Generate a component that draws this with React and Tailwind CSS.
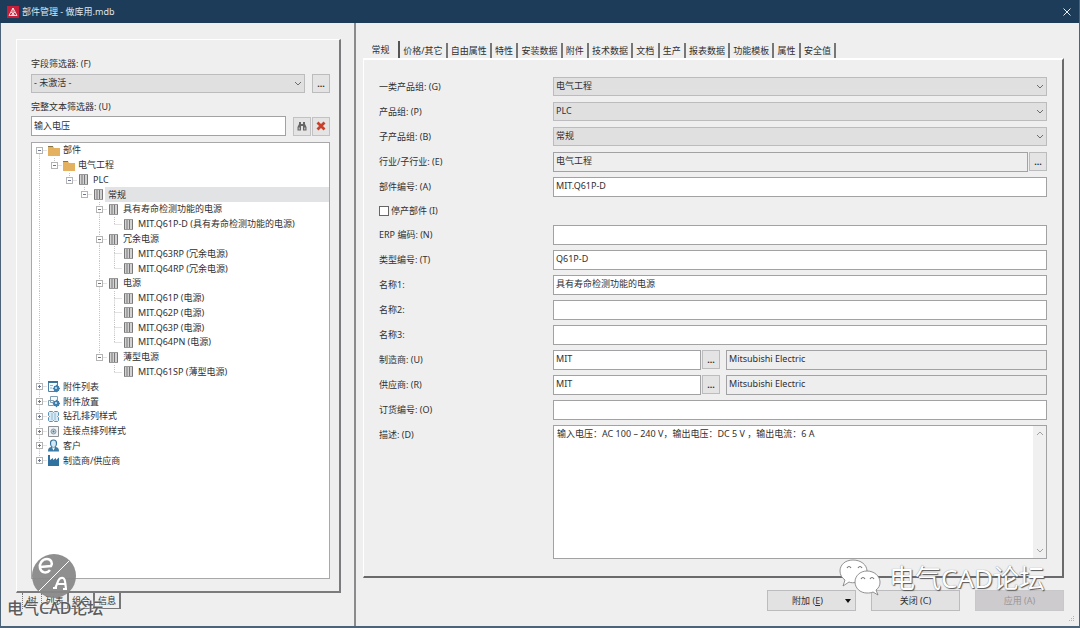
import { useState } from 'react';

const TREE = [
  { label: '部件', level: 0, icon: 'folder', open: true },
  { label: '电气工程', level: 1, icon: 'folder', open: true },
  { label: 'PLC', level: 2, icon: 'module', open: true },
  { label: '常规', level: 3, icon: 'module', open: true },
  { label: '具有寿命检测功能的电源', level: 4, icon: 'module', open: true },
  { label: 'MIT.Q61P-D (具有寿命检测功能的电源)', level: 5, icon: 'module' },
  { label: '冗余电源', level: 4, icon: 'module', open: true },
  { label: 'MIT.Q63RP (冗余电源)', level: 5, icon: 'module' },
  { label: 'MIT.Q64RP (冗余电源)', level: 5, icon: 'module' },
  { label: '电源', level: 4, icon: 'module', open: true },
  { label: 'MIT.Q61P (电源)', level: 5, icon: 'module' },
  { label: 'MIT.Q62P (电源)', level: 5, icon: 'module' },
  { label: 'MIT.Q63P (电源)', level: 5, icon: 'module' },
  { label: 'MIT.Q64PN (电源)', level: 5, icon: 'module' },
  { label: '薄型电源', level: 4, icon: 'module', open: true },
  { label: 'MIT.Q61SP (薄型电源)', level: 5, icon: 'module' },
  { label: '附件列表', level: 0, icon: 'list', open: false },
  { label: '附件放置', level: 0, icon: 'placement', open: false },
  { label: '钻孔排列样式', level: 0, icon: 'drill', open: false },
  { label: '连接点排列样式', level: 0, icon: 'point', open: false },
  { label: '客户', level: 0, icon: 'customer', open: false },
  { label: '制造商/供应商', level: 0, icon: 'factory', open: false },
];

const TABS = ['价格/其它', '自由属性', '特性', '安装数据', '附件', '技术数据', '文档', '生产', '报表数据', '功能模板', '属性', '安全值'];

// true when a later row sits on the same level under the same parent
function hasNext(index, level) {
  for (let i = index + 1; i < TREE.length; i++) {
    if (TREE[i].level < level) return false;
    if (TREE[i].level === level) return true;
  }
  return false;
}

function Gear() {
  return (
    <g>
      <circle cx="9.5" cy="8.5" r="3" fill="#3f7fae" />
      <path d="M9.5 4.8v7.4M5.8 8.5h7.4M7 6l5 5M12 6l-5 5" stroke="#3f7fae" strokeWidth="1" />
      <circle cx="9" cy="8" r="1" fill="#dcecf6" />
    </g>
  );
}

function TreeIcon({ name }) {
  return (
    <svg viewBox="0 0 13 13" className="h-[13px] w-[13px] shrink-0" fill="none">
      {name === 'folder' && (
        <>
          <path d="M1 2h5l1 2h6v8H1z" fill="#e3b160" />
          <path d="M1 2.5h5" stroke="#8a744a" />
        </>
      )}
      {name === 'module' && (
        <>
          <path d="M2 1.5h8.5v10H2z" fill="#d2d2d2" />
          <path d="M2.5 1v11M5 2v9M7.5 2v9M10.5 1v11" stroke="#777" />
          <path d="M2 1.5h9M2 11.5h9" stroke="#999" />
        </>
      )}
      {name === 'list' && (
        <>
          <path d="M1.5 1.5h9v10h-9z" fill="#f4f9fc" stroke="#4f81a5" />
          <path d="M1 2h10" stroke="#3c7198" strokeWidth="2" />
          <path d="M3 5.5h3M3 8h2" stroke="#8fb3cb" />
          <Gear />
        </>
      )}
      {name === 'placement' && (
        <>
          <path d="M3.5 1.5h7v6h-7zM1.5 5.5h5v5h-5z" fill="#f7fafc" stroke="#7f9cb0" />
          <Gear />
        </>
      )}
      {name === 'drill' && (
        <>
          <path d="M1.5 2.5l1-1h3l1 1 1-1h3l1 1v3l-1 1 1 1v3l-1 1h-3l-1-1-1 1h-3l-1-1v-3l1-1-1-1z" fill="#d9eaf4" stroke="#5b93b6" />
          <path d="M5 3v7M8 3v7" stroke="#8fb8d0" />
        </>
      )}
      {name === 'point' && (
        <>
          <path d="M1.5 1.5h10v10h-10z" fill="#f1f3f4" stroke="#8b9195" />
          <circle cx="6.5" cy="6.5" r="2.5" fill="#c6d5df" stroke="#7d97a8" />
          <circle cx="6.5" cy="6.5" r="1" fill="#55758a" />
        </>
      )}
      {name === 'customer' && (
        <>
          <path d="M1 12.500c0-3 1-4 3-4.500h5c2 .5 3 1.500 3 4.500z" fill="#3b7ba8" />
          <path d="M3.500 4c0-2 1-3 3-3s3 1 3 3-1 4.500-3 4.500-3-2.500-3-4.500z" fill="#d5e7f2" stroke="#34719c" strokeWidth="1.200" />
          <path d="M5 8.500l1.500 3L8 8.500z" fill="#fff" />
        </>
      )}
      {name === 'factory' && (
        <path d="M1 12V1h2v5l3-2v2l3-2v2l3-2.5V12z" fill="#2f719f" />
      )}
    </svg>
  );
}

function TreeRow({ node, index }) {
  const selected = index === 3;
  const isLeaf = node.open === undefined;
  const guides = [];
  for (let l = 0; l < node.level; l++) guides.push(hasNext(index, l));

  return (
    <li role="treeitem" aria-level={node.level + 1} aria-selected={selected} className="flex min-h-0 items-center">
      {guides.map((line, l) => (
        <svg key={l} className="h-full w-[15px] shrink-0">
          {line && <line x1="7.5" y1="0" x2="7.5" y2="100%" stroke="#c4c4c4" strokeDasharray="1 1" />}
        </svg>
      ))}
      <button type="button" tabIndex={isLeaf ? -1 : 0} aria-label={node.label} className="h-full w-[15px] shrink-0">
        <svg className="block h-full w-[15px]">
          {index > 0 && <line x1="7.5" y1="0" x2="7.5" y2="50%" stroke="#c4c4c4" strokeDasharray="1 1" />}
          {hasNext(index, node.level) && <line x1="7.5" y1="50%" x2="7.5" y2="100%" stroke="#c4c4c4" strokeDasharray="1 1" />}
          <line x1="7.5" y1="7.5" x2="15" y2="7.5" stroke="#c4c4c4" strokeDasharray="1 1" />
          {!isLeaf && (
            <>
              <rect x="4.5" y="4.5" width="6" height="6" fill="#fff" stroke="#b4b4b4" />
              <path d={node.open ? 'M6 7.5h3' : 'M6 7.5h3M7.5 6v3'} stroke="#6b7690" />
            </>
          )}
        </svg>
      </button>
      <TreeIcon name={node.icon} />
      <span className={selected ? 'flex h-full flex-1 items-center bg-[#e2e3e5] pl-[3px]' : 'pl-[3px]'}>{node.label}</span>
    </li>
  );
}

function Chevron({ className }) {
  return (
    <svg viewBox="0 0 8 6" className={`h-[6px] w-2 ${className}`} fill="none" stroke="#6d6d6d">
      <path d="M1 1l3 3 3-3" />
    </svg>
  );
}

function Select({ id, value }) {
  return (
    <div className="relative min-w-0 flex-1">
      <select id={id} defaultValue={value} className="block h-[19px] w-full appearance-none border border-[#bcbcbe] bg-[#e0e0e1] px-[2px] pb-[2px] leading-3">
        <option>{value}</option>
      </select>
      <Chevron className="pointer-events-none absolute right-[3px] top-[7px]" />
    </div>
  );
}

function DotsButton({ label }) {
  return (
    <button type="button" aria-label={label} className="h-[19px] w-[18px] shrink-0 border border-[#bcbcbe] bg-[#e4e4e5] font-bold leading-3">
      ...
    </button>
  );
}

function Input({ id, value = '', readOnly, label, className = 'flex-1' }) {
  return (
    <input
      id={id}
      aria-label={label}
      defaultValue={value}
      readOnly={readOnly}
      className={`block h-5 min-w-0 border border-[#a2a2a4] px-[2px] pb-[2px] leading-3 ${readOnly ? 'bg-[#eeeeef]' : 'bg-white'} ${className}`}
    />
  );
}

function Row({ id, label, children }) {
  return (
    <div className="flex h-[25px] items-center">
      <label htmlFor={id} className="w-[174px] shrink-0">{label}</label>
      {children}
    </div>
  );
}

function LeftPanel() {
  return (
    <aside className="flex w-[353px] shrink-0 flex-col pb-[17px] pl-[15px] pr-[13px] pt-4">
      <div className="flex min-h-0 flex-1 flex-col border-b-2 border-l border-r-2 border-t border-b-[#7b7b7d] border-l-white border-r-[#7b7b7d] border-t-white pb-3 pl-[14px] pr-[9px] pt-[18px]">
        <label htmlFor="field-filter" className="leading-3">字段筛选器: (F)</label>
        <div className="mt-1 flex gap-[7px]">
          <Select id="field-filter" value="- 未激活 -" />
          <DotsButton label="字段筛选器" />
        </div>
        <label htmlFor="text-filter" className="mt-2 leading-3">完整文本筛选器: (U)</label>
        <div className="mt-[3px] flex items-center">
          <Input id="text-filter" value="输入电压" />
          <button type="button" aria-label="查找" className="ml-[7px] flex h-[19px] w-[18px] items-center justify-center border border-[#c2c2c4] bg-[#e4e4e5]">
            <svg viewBox="0 0 10 10" className="h-[10px] w-[10px]" fill="#666">
              <path d="M2 1h2v2h2V1h2v2l1.5 3v3.5H6V5H4v4.5H.5V6L2 3z" />
              <path d="M2.2 6.5v2M7.8 6.5v2" stroke="#d8d8d8" />
            </svg>
          </button>
          <button type="button" aria-label="清除" className="ml-px flex h-[19px] w-[18px] items-center justify-center border border-[#c2c2c4] bg-[#e4e4e5]">
            <svg viewBox="0 0 10 10" className="h-[10px] w-[10px]" stroke="#c8402c" strokeWidth="2.8">
              <path d="M1.5 1.5l7 7M8.5 1.5l-7 7" />
            </svg>
          </button>
        </div>
        <div className="mt-[6px] flex-1 overflow-hidden border border-[#a8a8aa] bg-white">
          <ul role="tree" className="grid h-[325px] auto-rows-fr">
            {TREE.map((node, i) => <TreeRow key={i} node={node} index={i} />)}
          </ul>
        </div>
      </div>
      <div role="tablist" className="flex h-4 pl-[6px]">
        <button role="tab" aria-selected="true" className="w-5 border-x border-dotted border-[#777]">树</button>
        <button role="tab" className="w-[27px] border-b border-r-2 border-[#777]">列表</button>
        <button role="tab" className="w-[26px] border-b border-r-2 border-[#777]">组合</button>
        <button role="tab" className="w-[26px] border-b border-r-2 border-[#777]">信息</button>
      </div>
    </aside>
  );
}

function PartForm() {
  const [discontinued, setDiscontinued] = useState(false);

  return (
    <form className="flex min-h-0 flex-1 flex-col border-b-2 border-l border-r-2 border-t-2 border-b-[#6a6a6c] border-l-white border-r-[#6a6a6c] border-t-white pb-[17px] pl-[15px] pr-[15px] pt-[14px]">
      <Row id="group-g" label="一类产品组: (G)"><Select id="group-g" value="电气工程" /></Row>
      <Row id="group-p" label="产品组: (P)"><Select id="group-p" value="PLC" /></Row>
      <Row id="group-b" label="子产品组: (B)"><Select id="group-b" value="常规" /></Row>
      <Row id="trade" label="行业/子行业: (E)">
        <Input id="trade" value="电气工程" readOnly />
        <span className="w-px" />
        <DotsButton label="行业" />
      </Row>
      <Row id="part-no" label="部件编号: (A)"><Input id="part-no" value="MIT.Q61P-D" /></Row>
      <div className="flex h-[23px] items-center">
        <input
          id="discontinued"
          type="checkbox"
          checked={discontinued}
          onChange={(e) => setDiscontinued(e.target.checked)}
          className="h-[10px] w-[10px] appearance-none border border-[#666] bg-white checked:bg-[#555]"
        />
        <label htmlFor="discontinued" className="pl-[2px]">停产部件 (I)</label>
      </div>
      <Row id="erp" label="ERP 编码: (N)"><Input id="erp" /></Row>
      <Row id="type-no" label="类型编号: (T)"><Input id="type-no" value="Q61P-D" /></Row>
      <Row id="name1" label="名称1:"><Input id="name1" value="具有寿命检测功能的电源" /></Row>
      <Row id="name2" label="名称2:"><Input id="name2" /></Row>
      <Row id="name3" label="名称3:"><Input id="name3" /></Row>
      <Row id="maker" label="制造商: (U)">
        <Input id="maker" value="MIT" className="mr-px w-[148px]" />
        <DotsButton label="制造商" />
        <Input label="制造商名称" value="Mitsubishi Electric" readOnly className="ml-[6px] flex-1" />
      </Row>
      <Row id="supplier" label="供应商: (R)">
        <Input id="supplier" value="MIT" className="mr-px w-[148px]" />
        <DotsButton label="供应商" />
        <Input label="供应商名称" value="Mitsubishi Electric" readOnly className="ml-[6px] flex-1" />
      </Row>
      <Row id="order-no" label="订货编号: (O)"><Input id="order-no" /></Row>
      <div className="flex min-h-0 flex-1 pt-[3px]">
        <label htmlFor="description" className="w-[174px] shrink-0 pt-1 leading-3">描述: (D)</label>
        <div className="flex flex-1 border border-[#a2a2a4] bg-white">
          <textarea
            id="description"
            defaultValue="输入电压：AC 100 – 240 V，输出电压：DC 5 V ，输出电流：6 A"
            className="min-w-0 flex-1 resize-none overflow-hidden px-[3px] pt-[2px] leading-3 outline-none"
          />
          <div className="flex w-[13px] flex-col items-center justify-between bg-[#f0f0f1] py-1">
            <Chevron className="rotate-180 opacity-60" />
            <Chevron className="opacity-60" />
          </div>
        </div>
      </div>
    </form>
  );
}

function Watermarks() {
  return (
    <div aria-hidden="true" className="pointer-events-none">
      <svg viewBox="0 0 44 44" className="absolute bottom-[28px] left-8 h-11 w-11">
        <circle cx="22" cy="22" r="22" fill="#868686" fillOpacity="0.93" />
        <path d="M7 37L37 7" stroke="#fff" />
        <path d="M8 13l11-1c2-3 0-7-4-7-5 0-8 5-7 9 1 5 7 6 10 2" stroke="#fff" strokeWidth="2.5" fill="none" />
        <path d="M21 34h4M23 34c3-3 2-11 8-10 3 1 2 7 3 10M26 30h7M31 35h4" stroke="#fff" strokeWidth="2.2" fill="none" />
      </svg>
      <span className="absolute bottom-[8px] left-[7px] text-base font-medium leading-5 text-[#5c5c5e] [text-shadow:0_0_2px_#fff]">电气CAD论坛</span>
      <div className="absolute bottom-[29px] right-[34px] flex items-center gap-2">
        <svg viewBox="0 0 42 38" className="h-[38px] w-[42px]" fill="#fff" stroke="#77777a" strokeWidth="0.8">
          <path d="M14 1C6 1 1 6 1 12c0 4 2 7 5 9l-2 6 6-4c2 1 5 1 8 0 6-1 10-5 10-11S22 1 14 1z" />
          <path d="M28 12c-7 0-12 5-12 11s5 11 12 11c2 0 4 0 6-1l5 3-2-5c3-2 4-5 4-8 0-6-6-11-13-11z" />
          <path d="M8 9q2-3 4 0M19 9q2-3 4 0M22 20q2-3 4 0M31 20q2-3 4 0" fill="none" strokeWidth="1.2" />
        </svg>
        <span className="text-[26px] font-normal leading-9 text-white [text-shadow:1px_1px_1px_#555,0_0_1px_#777]">电气CAD论坛</span>
      </div>
    </div>
  );
}

export default function App() {
  return (
    <div className="relative flex h-screen min-h-[600px] flex-col overflow-hidden border-b-2 border-r border-[#4d6478] bg-[#efeff0] font-['Noto_Sans','Noto_Sans_CJK_SC',sans-serif] text-[9px] leading-3 text-[#2f2f31]">
      <header className="flex h-[23px] shrink-0 items-center bg-[#1c3c59] pl-[7px] pr-2 text-[#dfe6ec]">
        <svg viewBox="0 0 12 12" className="h-3 w-3" fill="none">
          <path d="M0 0h12v12H0z" fill="#c71f3a" />
          <path d="M6 2L2 9.5h8zM6 2v7.5M4 6l4 3.5M8 6L4 9.5" stroke="#fff" strokeWidth="0.8" />
        </svg>
        <h1 className="pl-[3px]">部件管理 - 做库用.mdb</h1>
        <button type="button" aria-label="关闭窗口" className="ml-auto">
          <svg viewBox="0 0 8 8" className="h-2 w-2" stroke="#e6edf2">
            <path d="M.5.5l7 7M7.5.5l-7 7" />
          </svg>
        </button>
      </header>

      <main className="flex min-h-0 flex-1 border-l border-[#4d6478]">
        <LeftPanel />
        <section className="flex min-w-0 flex-1 flex-col border-l-2 border-[#8a8b8d] pb-[15px] pl-[7px] pr-[15px] pt-[18px]">
          <div role="tablist" className="flex h-[17px] items-end">
            <button role="tab" aria-selected="true" className="h-full w-[37px] border-r-2 border-[#555]">常规</button>
            <div className="flex h-[15px] w-[436px]">
              {TABS.map((tab) => (
                <button key={tab} role="tab" className="flex-auto whitespace-nowrap border-r-2 border-[#777]">{tab}</button>
              ))}
            </div>
          </div>
          <PartForm />
          <div className="mt-3 flex justify-end gap-[15px]">
            <button type="button" className="relative h-[21px] w-[89px] border border-[#bcbcbe] bg-[#e2e2e3] pr-2">
              附加 (<u>E</u>)
              <svg viewBox="0 0 6 4" className="absolute right-1 top-2 h-1 w-[6px]"><path d="M0 0h6L3 4z" fill="#111" /></svg>
            </button>
            <button type="button" className="h-[21px] w-[89px] border border-[#bcbcbe] bg-[#e2e2e3]">关闭 (C)</button>
            <button type="button" disabled className="h-[21px] w-[89px] border border-[#c8c8ca] bg-[#cdcbcd] text-[#98989a]">应用 (A)</button>
          </div>
        </section>
      </main>

      <svg viewBox="0 0 6 6" className="absolute bottom-1 right-1 h-[6px] w-[6px]" fill="#b4b4b6" aria-hidden="true">
        <path d="M4 0h1v1H4zM2 2h1v1H2zM4 2h1v1H4zM0 4h1v1H0zM2 4h1v1H2zM4 4h1v1H4z" />
      </svg>
      <Watermarks />
    </div>
  );
}
